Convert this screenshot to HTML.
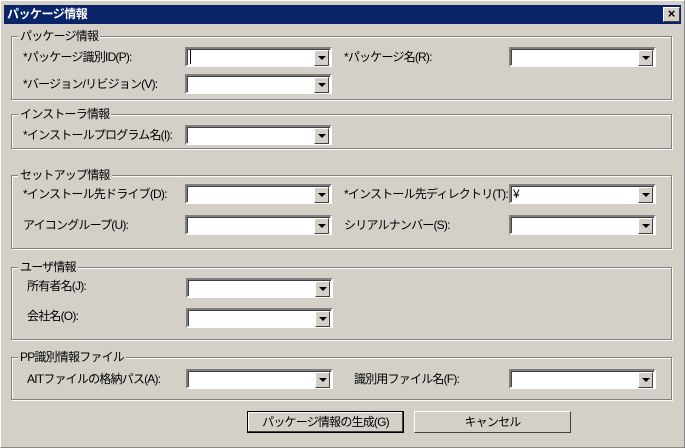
<!DOCTYPE html>
<html><head><meta charset="utf-8"><style>
*{margin:0;padding:0;box-sizing:border-box}
body{width:685px;height:448px;background:#fff;position:relative;overflow:hidden;font-family:"Liberation Sans","Noto Sans CJK JP",sans-serif;font-size:12px;color:#000}
.win{position:absolute;left:0;top:0;width:685px;height:448px;background:#d4d0c8;border:1px solid #888;border-top-color:#fff;border-left-color:#fff}
.title{position:absolute;left:3px;top:4px;width:677px;height:19px;background:#0a246a;color:#fff;font-weight:bold;font-size:12px;line-height:19px;padding-left:3px;letter-spacing:-0.5px}
.close{position:absolute;left:662px;top:6px;width:17px;height:15px;background:#d4d0c8;border:1px solid;border-color:#fff #404040 #404040 #fff;font-size:13px;line-height:12px;text-align:center;font-weight:bold;color:#000}
.g{position:absolute;left:10px;width:661px;border:1px solid #808080;box-shadow:1px 1px 0 #fff, inset 1px 1px 0 #fff}
.g .t{position:absolute;left:6px;top:-9px;background:#d4d0c8;padding:0 2px;line-height:16px;letter-spacing:-0.8px}
.l{position:absolute;line-height:16px;white-space:nowrap;letter-spacing:-0.8px}
.c{position:absolute;width:147px;height:20px;background:#fff;border:2px solid;border-color:#808080 #fff #fff #808080;box-shadow:inset 1px 1px 0 #404040}
.c .b{position:absolute;right:1px;top:1px;width:15px;height:16px;background:#d4d0c8;border:1px solid;border-color:#fff #404040 #404040 #fff}
.c .b:after{content:"";position:absolute;left:3px;top:5px;border-left:4px solid transparent;border-right:4px solid transparent;border-top:4px solid #000}
.btn{position:absolute;top:410px;height:22px;background:#d4d0c8;border:1px solid;border-color:#fff #404040 #404040 #fff;text-align:center;line-height:20px;letter-spacing:-0.8px}
</style></head><body>
<div class="win">
<div class="title">パッケージ情報</div>
<div class="close">×</div>

<div class="g" style="top:35px;height:64px"><span class="t">パッケージ情報</span></div>
<div class="l" style="left:22px;top:48px">*パッケージ識別ID(P):</div>
<div class="c" style="left:184px;top:46px"><div class="b"></div><span style="position:absolute;left:3px;top:1px;width:1px;height:14px;background:#000"></span></div>
<div class="l" style="left:343px;top:48px">*パッケージ名(R):</div>
<div class="c" style="left:508px;top:46px"><div class="b"></div></div>
<div class="l" style="left:22px;top:75px">*バージョン/リビジョン(V):</div>
<div class="c" style="left:184px;top:73px"><div class="b"></div></div>

<div class="g" style="top:113px;height:35px"><span class="t">インストーラ情報</span></div>
<div class="l" style="left:22px;top:126px">*インストールプログラム名(I):</div>
<div class="c" style="left:184px;top:124px"><div class="b"></div></div>

<div class="g" style="top:174px;height:74px"><span class="t">セットアップ情報</span></div>
<div class="l" style="left:22px;top:185px">*インストール先ドライブ(D):</div>
<div class="c" style="left:184px;top:183px"><div class="b"></div></div>
<div class="l" style="left:343px;top:185px">*インストール先ディレクトリ(T):</div>
<div class="c" style="left:508px;top:183px"><div class="b"></div><span style="position:absolute;left:2px;top:0;line-height:16px">¥</span></div>
<div class="l" style="left:22px;top:216px">アイコングループ(U):</div>
<div class="c" style="left:184px;top:214px"><div class="b"></div></div>
<div class="l" style="left:343px;top:216px">シリアルナンバー(S):</div>
<div class="c" style="left:508px;top:214px"><div class="b"></div></div>

<div class="g" style="top:266px;height:73px"><span class="t">ユーザ情報</span></div>
<div class="l" style="left:26px;top:277px">所有者名(J):</div>
<div class="c" style="left:185px;top:277px"><div class="b"></div></div>
<div class="l" style="left:26px;top:307px">会社名(O):</div>
<div class="c" style="left:185px;top:307px"><div class="b"></div></div>

<div class="g" style="top:356px;height:43px"><span class="t">PP識別情報ファイル</span></div>
<div class="l" style="left:26px;top:370px">AITファイルの格納パス(A):</div>
<div class="c" style="left:185px;top:368px"><div class="b"></div></div>
<div class="l" style="left:353px;top:370px">識別用ファイル名(F):</div>
<div class="c" style="left:508px;top:368px"><div class="b"></div></div>

<div class="btn" style="left:246px;width:157px;border:1px solid #000;box-shadow:inset -1px -1px 0 #404040, inset 1px 1px 0 #fff">パッケージ情報の生成(G)</div>
<div class="btn" style="left:413px;width:157px">キャンセル</div>
</div>
</body></html>
